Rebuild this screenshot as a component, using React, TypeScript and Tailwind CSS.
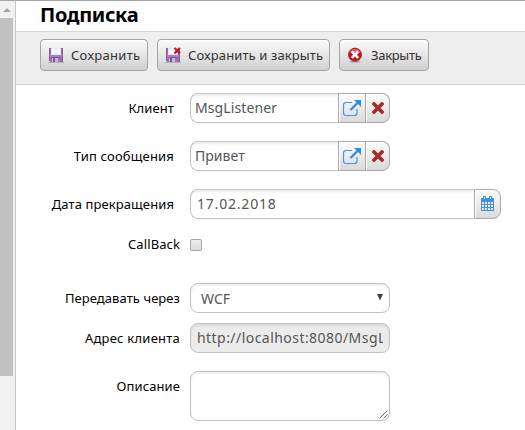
import type { ReactNode } from "react";

const field =
  "box-border h-[30px] rounded-[8px] border border-[#c3c3c3] bg-white shadow-[inset_0_2px_2px_rgba(0,0,0,0.07)] outline-none";
const addon =
  "flex h-[30px] items-center justify-center border border-[#a9a9a9] bg-linear-to-b from-[#fcfcfc] to-[#dadada] shadow-[inset_1px_1px_0_#fff]";

function Floppy({ cross = false }: { cross?: boolean }) {
  return (
    <svg width="16" height="16" viewBox="0 0 16 16" className="shrink-0" shapeRendering="crispEdges">
      <path d="M1 1h14v14H2l-1-1z" fill="#a268bd" />
      <path d="M1 1h1v13H1zM14 1h1v14h-1z" fill="#8d58a6" />
      <path d="M3 1h10v7H3z" fill="#d9ecea" />
      <path d="M4 2h8v5H4z" fill="#f0f9f8" />
      <path d="M2 8h12v2H2z" fill="#b07fca" />
      <path d="M4 10h8v5H4z" fill="#cbbdd3" />
      <path d="M4 10h8v1H4z" fill="#7c5391" />
      <path d="M5 11h2v4H5z" fill="#7c5391" />
      <path d="M10 11h2v4h-2z" fill="#9a7bac" />
      <path d="M0 15h16v1H0z" fill="#b0b0b0" />
      {cross && (
        <path d="m9.500 1 5.500 5.400m0-5.400-5.500 5.400" stroke="#c51d25" strokeWidth="2.200" shapeRendering="auto" />
      )}
    </svg>
  );
}

function CloseIcon() {
  return (
    <svg width="16" height="16" viewBox="0 0 16 16" className="shrink-0">
      <ellipse cx="8" cy="14.800" rx="5.500" ry="1" fill="#aaa" />
      <circle cx="8" cy="7.700" r="6.600" fill="#bd1823" stroke="#a21b23" strokeWidth=".7" />
      <path d="M2.500 6a5.800 5.800 0 0 1 11 0Q8 4 2.500 6" fill="#df6266" />
      <path d="m4.800 4.500 6.400 6.400m0-6.400-6.400 6.400" stroke="#fff" strokeWidth="2.500" />
    </svg>
  );
}

function OpenIcon() {
  return (
    <svg width="18" height="18" viewBox="0 0 18 18" fill="none" className="-mt-px -ml-px">
      <path
        d="M9 3.500H3a2.500 2.500 0 0 0-2.500 2.500v8A2.500 2.500 0 0 0 3 16.500h8.500a2.500 2.500 0 0 0 2.500-2.500V10"
        stroke="#3f95e8"
        strokeWidth="1.200"
      />
      <path d="m7.500 11 7-7" stroke="#2f8de4" strokeWidth="2.300" />
      <path d="M11 1h7v7z" fill="#2f8de4" />
    </svg>
  );
}

function RedCross() {
  return (
    <svg width="12" height="12" viewBox="0 0 12 12">
      <path d="m2 2 8 8m0-8-8 8" stroke="#a32d2d" strokeWidth="3.700" strokeLinecap="square" />
    </svg>
  );
}

function CalendarIcon() {
  return (
    <svg width="13" height="15" viewBox="0 0 13 15" shapeRendering="crispEdges" className="-mt-px">
      <path d="M0 2h13v13H0z" fill="#438fdd" />
      <path
        d="M1 6h2v2H1zM4 6h2v2H4zM7 6h2v2H7zM10 6h2v2h-2zM1 9h2v2H1zM4 9h2v2H4zM7 9h2v2H7zM10 9h2v2h-2zM1 12h2v2H1zM4 12h2v2H4zM7 12h2v2H7zM10 12h2v2h-2z"
        fill="#e7f0f8"
      />
      <path d="M2 0h3v4H2zM8 0h3v4H8z" fill="#438fdd" />
      <path d="M3 1h1v2H3zM9 1h1v2H9z" fill="#e7f0f8" />
    </svg>
  );
}

function Row({ label, children, className = "", labelClass = "" }: {
  label: string; children: ReactNode; className?: string; labelClass?: string;
}) {
  return (
    <div className={`flex ${className}`}>
      <div className={`h-[30px] w-[174px] shrink-0 whitespace-nowrap text-right text-[13px] leading-[30px] text-black ${labelClass}`}>
        {label}
      </div>
      {children}
    </div>
  );
}

function Lookup({ value, valueClass }: { value: string; valueClass: string }) {
  return (
    <div className="flex w-[200px]">
      <div className={`${field} w-[148px] shrink-0 rounded-r-none border-r-0 pl-1 text-[14px] leading-[28px] ${valueClass}`}>{value}</div>
      <button className={`${addon} w-[28px] shrink-0`}><OpenIcon /></button>
      <button className={`${addon} w-[24px] shrink-0 rounded-r-[8px] border-l-0`}><RedCross /></button>
    </div>
  );
}

function ToolButton({ icon, label, className }: { icon: ReactNode; label: string; className: string }) {
  return (
    <button className={`flex h-8 items-center gap-[7px] whitespace-nowrap rounded-[4px] border border-[#a5a5a5] bg-linear-to-b from-[#fbfbfb] to-[#d0d0d0] pl-[7px] text-[13px] text-[#333] shadow-[inset_0_1px_0_#fff] ${className}`}>
      {icon}<span className="pt-px">{label}</span>
    </button>
  );
}

export default function App() {
  return (
    <div className="flex h-[430px] w-[525px] overflow-hidden border-t border-[#a5a5a5] bg-white font-['Noto_Sans',sans-serif] text-[#555]">
      <aside className="w-[15px] shrink-0 bg-[#f1f1f1]">
        <div className="flex h-[17px] w-[13px] items-center justify-center">
          <svg width="8" height="4" viewBox="0 0 8 4"><path d="M4 0l4 4H0z" fill="#a3a3a3" /></svg>
        </div>
        <div className="h-[358px] w-[13px] bg-[#c1c1c1]" />
      </aside>
      <main className="min-w-0 flex-1 border-l border-[#c6c6c6]">
        <h1 className="h-[30px] pl-6 text-[20px] font-bold leading-[28px] tracking-[-0.35px] text-black">Подписка</h1>
        <div className="flex h-[54px] gap-[9px] border-y border-[#d5d5d5] bg-[#eee] pl-6 pt-[7px]">
          <ToolButton icon={<Floppy />} label="Сохранить" className="w-[108px] tracking-[0.3px]" />
          <ToolButton icon={<Floppy cross />} label="Сохранить и закрыть" className="w-[173px] tracking-[0.12px]" />
          <ToolButton icon={<CloseIcon />} label="Закрыть" className="w-[90px] !gap-2 tracking-[-0.3px]" />
        </div>
        <div className="pt-2">
          <Row label="Клиент" labelClass="pr-4 tracking-[0.1px]">
            <Lookup value="MsgListener" valueClass="tracking-[0.1px]" />
          </Row>
          <Row label="Тип сообщения" className="mt-[18px]" labelClass="pr-4 tracking-[0.17px]">
            <Lookup value="Привет" valueClass="tracking-[0.05px]" />
          </Row>
          <Row label="Дата прекращения" className="mt-[18px]" labelClass="pr-4 tracking-[0.1px]">
            <div className={`${field} w-[284px] shrink-0 rounded-r-none border-r-0 pl-[6px] text-[14px] leading-[28px] tracking-[0.8px]`}>17.02.2018</div>
            <button className={`${addon} w-[27px] shrink-0 rounded-r-[8px]`}><CalendarIcon /></button>
          </Row>
          <Row label="CallBack" className="mt-[11px]" labelClass="pr-[10px] tracking-[0.1px] !leading-[29px]">
            <input aria-label="CallBack" type="checkbox" className="mt-[9px] h-3 w-3 appearance-none rounded-[2px] border border-[#a5a5a5] bg-linear-to-b from-[#eee] to-[#dcdcdc]" />
          </Row>
          <Row label="Передавать через" className="mt-[23px]" labelClass="pr-[10px] tracking-[0.07px]">
            <div className={`${field} flex w-[200px] items-center justify-between pl-[10px] pr-[6px] text-[14px]`}>
              <span>WCF</span>
              <svg width="6" height="7" viewBox="0 0 6 7" className="-mt-px"><path d="M0 0h6L3 6.500z" fill="#444" /></svg>
            </div>
          </Row>
          <Row label="Адрес клиента" className="mt-[10px]" labelClass="pr-[10px] tracking-[0.23px]">
            <div className={`${field} w-[200px] !bg-[#ebebeb] px-[6px] text-[14px] leading-[28px] tracking-[0.45px]`}>
              <div className="overflow-hidden whitespace-nowrap">http://localhost:8080/MsgListener</div>
            </div>
          </Row>
          <Row label="Описание" className="mt-[18px]" labelClass="pr-[10px] tracking-[0.1px]">
            <div className={`${field} flex !h-[50px] w-[200px] items-end justify-end pb-px pr-px`}>
              <svg width="9" height="9" viewBox="0 0 9 9"><path d="M.5 8.500l8-8M4.500 8.500l4-4" stroke="#666" strokeWidth=".9" /></svg>
            </div>
          </Row>
        </div>
      </main>
    </div>
  );
}
